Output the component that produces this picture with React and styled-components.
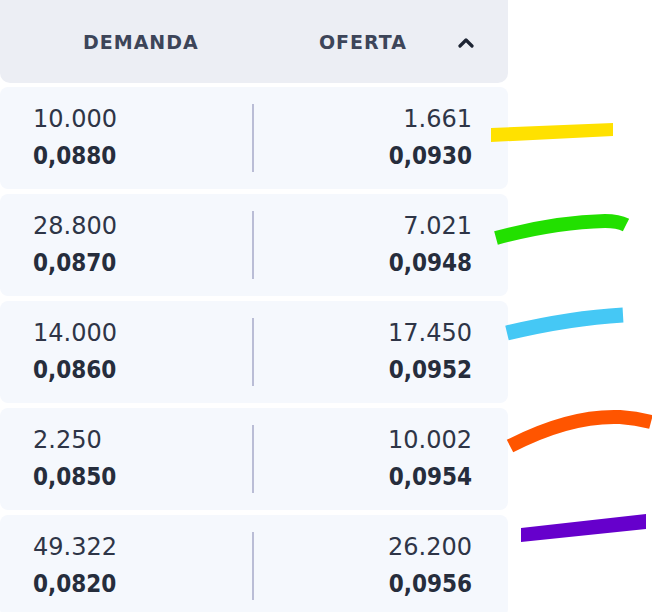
import React from 'react';
import styled, { createGlobalStyle } from 'styled-components';

const GlobalStyle = createGlobalStyle`
  html, body {
    margin: 0;
    padding: 0;
    background: #ffffff;
  }
  body {
    font-family: "DejaVu Sans", "Noto Sans", sans-serif;
  }
`;

const Page = styled.div`
  position: relative;
  width: 652px;
  height: 612px;
  overflow: hidden;
`;

const Panel = styled.div`
  display: flex;
  flex-direction: column;
  gap: 5px;
  width: 508px;
`;

const Header = styled.div`
  display: flex;
  align-items: center;
  height: 83px;
  margin-bottom: -1px;
  padding: 0 33px 0 83px;
  box-sizing: border-box;
  background: #eceef4;
  border-radius: 0 0 10px 10px;
`;

const HeaderLabel = styled.span`
  font-size: 19px;
  font-weight: 700;
  letter-spacing: 1px;
  color: #3d4559;
  margin-left: ${(props) => (props.push ? 'auto' : '0')};
`;

const Chevron = styled.svg`
  display: block;
  margin-left: 50px;
`;

const Card = styled.div`
  display: grid;
  grid-template-columns: 1fr 2px 1fr;
  align-items: center;
  height: 102px;
  padding: 0 36px 0 33px;
  box-sizing: border-box;
  background: #f5f8fd;
  border-radius: 8px;
`;

const Divider = styled.div`
  width: 2px;
  height: 68px;
  background: #babdd6;
`;

const Side = styled.div`
  display: flex;
  flex-direction: column;
  align-items: ${(props) => (props.right ? 'flex-end' : 'flex-start')};
`;

const Amount = styled.span`
  font-size: 24px;
  line-height: 37px;
  color: #2e3547;
`;

const Price = styled.span`
  font-size: 24px;
  line-height: 37px;
  font-weight: 700;
  font-family: "DejaVu Sans Condensed", "DejaVu Sans", sans-serif;
  color: #262d3c;
`;

const Marks = styled.svg`
  position: absolute;
  top: 0;
  left: 0;
  pointer-events: none;
`;

const rows = [
  { bidQty: '10.000', bid: '0,0880', askQty: '1.661', ask: '0,0930' },
  { bidQty: '28.800', bid: '0,0870', askQty: '7.021', ask: '0,0948' },
  { bidQty: '14.000', bid: '0,0860', askQty: '17.450', ask: '0,0952' },
  { bidQty: '2.250', bid: '0,0850', askQty: '10.002', ask: '0,0954' },
  { bidQty: '49.322', bid: '0,0820', askQty: '26.200', ask: '0,0956' },
];

function BookRow({ row }) {
  return (
    <Card>
      <Side>
        <Amount>{row.bidQty}</Amount>
        <Price>{row.bid}</Price>
      </Side>
      <Divider />
      <Side right>
        <Amount>{row.askQty}</Amount>
        <Price>{row.ask}</Price>
      </Side>
    </Card>
  );
}

export default function App() {
  return (
    <Page>
      <GlobalStyle />
      <Panel>
        <Header>
          <HeaderLabel>DEMANDA</HeaderLabel>
          <HeaderLabel push>OFERTA</HeaderLabel>
          <Chevron width="18" height="12" viewBox="0 0 18 12">
            <path d="M3 10 L9 4 L15 10" fill="none" stroke="#1d2433" strokeWidth="3.2" strokeLinecap="round" strokeLinejoin="round" />
          </Chevron>
        </Header>
        {rows.map((r) => (
          <BookRow key={r.bid} row={r} />
        ))}
      </Panel>
      <Marks width="652" height="612" viewBox="0 0 652 612">
        <polygon points="491,128 613,123 613,136 491,142" fill="#ffe100" />
        <path d="M496,238 Q555,222 605,221 Q618,221 626,225" fill="none" stroke="#22e000" strokeWidth="14" />
        <path d="M507,333 Q570,318 623,315" fill="none" stroke="#45c8f5" strokeWidth="15" />
        <path d="M510,446 Q570,415 620,417 Q636,418 651,422" fill="none" stroke="#ff5500" strokeWidth="14" />
        <polygon points="521,528 646,514 646,529 521,542" fill="#6600cc" />
      </Marks>
    </Page>
  );
}
